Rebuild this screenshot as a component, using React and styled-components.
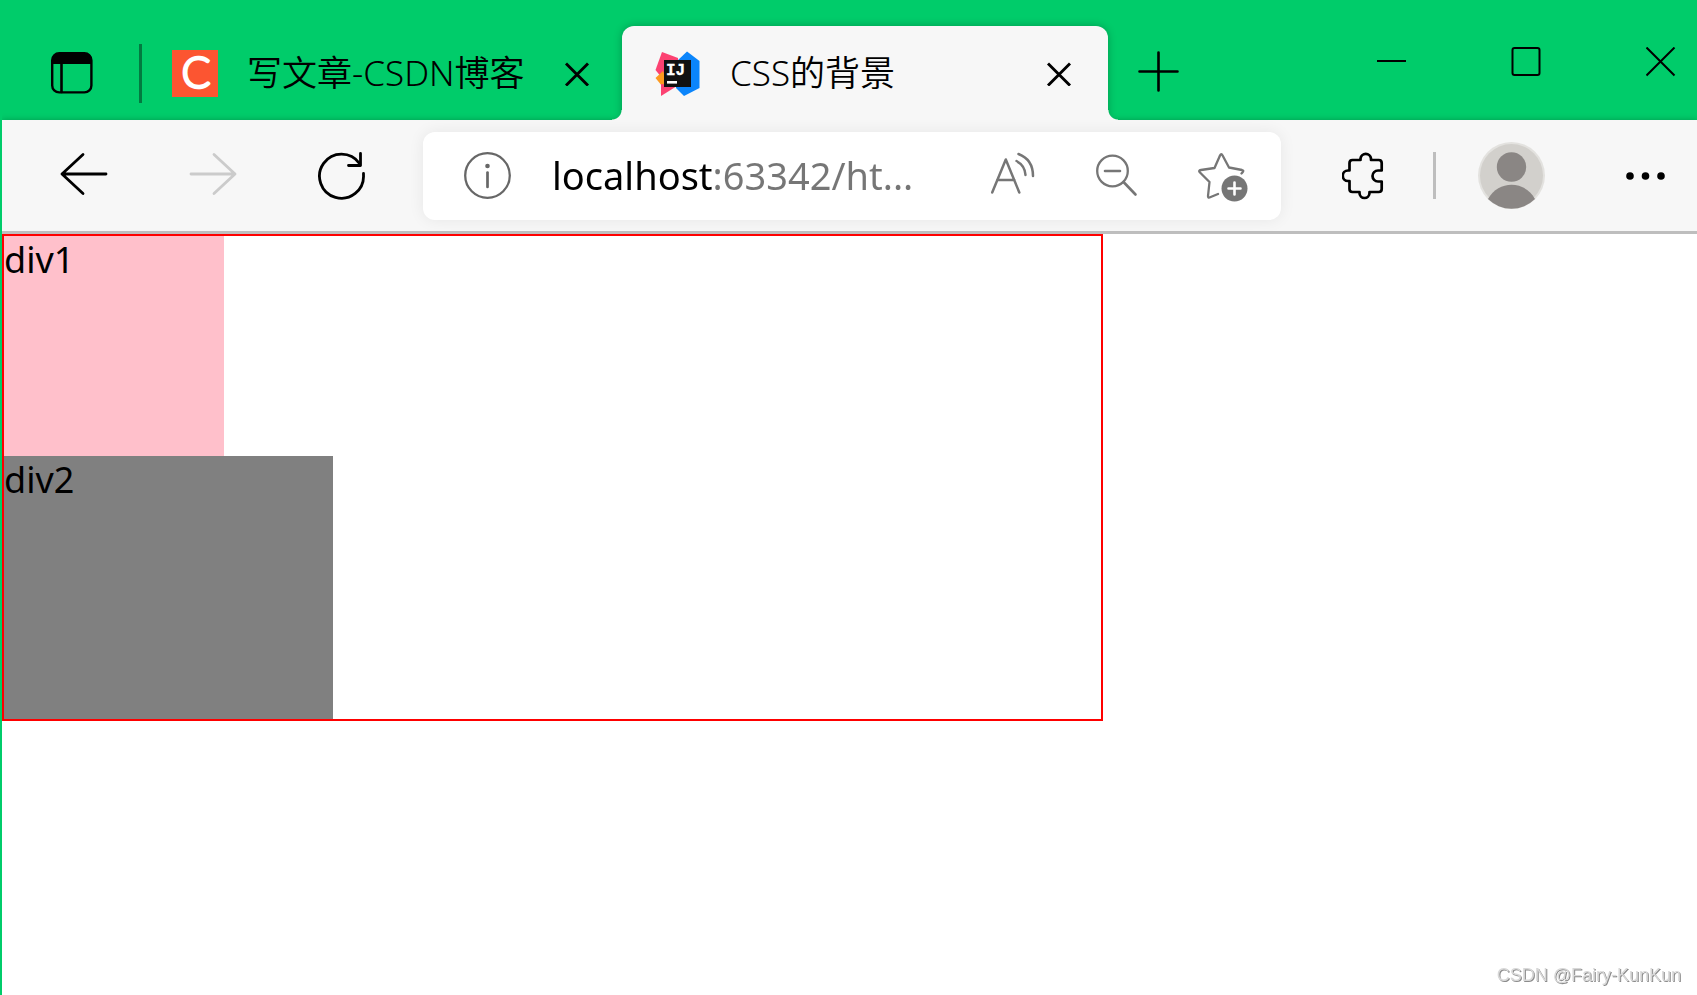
import React from "react";
import styled, { createGlobalStyle } from "styled-components";

const GREEN = "#00cc6a";
const CHROME = "#f7f7f7";
const UI_FONT = '"Noto Sans", "Noto Sans CJK SC", sans-serif';

const GlobalStyle = createGlobalStyle`
  * { box-sizing: border-box; }
  body { margin: 0; background: #fff; color: #000; font-family: ${UI_FONT}; }
  svg { display: block; flex: none; }
`;

const BrowserWindow = styled.div`
  display: flex;
  flex-direction: column;
  min-height: 100vh;
  border-left: 2px solid ${GREEN};
`;

const TitleBar = styled.header`
  display: flex;
  height: 120px;
  margin-left: -2px;
  background: ${GREEN};
`;

const TabStrip = styled.div`
  display: flex;
  align-items: center;
  flex: 1;
  min-width: 0;
  margin-top: 26px;
  padding-left: 51px;
`;

const Divider = styled.span`
  flex: none;
  width: 3px;
  height: ${(p) => p.$height}px;
  margin: ${(p) => p.$margin};
  background: ${(p) => p.$color};
`;

const IconButton = styled.button`
  display: flex;
  align-items: center;
  justify-content: center;
  flex: none;
  padding: 0;
  border: 0;
  background: none;
  color: ${(p) => p.$color || "#000"};
`;

const Tab = styled.div`
  display: flex;
  align-items: center;
  flex: none;
  height: 94px;
  width: ${(p) => (p.$active ? 486 : 480)}px;
  padding: 0 ${(p) => (p.$active ? "36px 0 32px" : "32px 0 30px")};
`;

const ActiveTab = styled(Tab)`
  position: relative;
  z-index: 1;
  border-radius: 12px 12px 0 0;
  background: ${CHROME};
  box-shadow: 0 0 8px rgba(0, 0, 0, 0.25);
  clip-path: inset(-10px -12px 0 -12px);

  &::before,
  &::after {
    content: "";
    position: absolute;
    bottom: 0;
    width: 10px;
    height: 10px;
  }
  &::before {
    right: 100%;
    background: radial-gradient(circle at 0 0, transparent 9px, ${CHROME} 10px);
  }
  &::after {
    left: 100%;
    background: radial-gradient(circle at 100% 0, transparent 9px, ${CHROME} 10px);
  }
`;

const TabTitle = styled.button`
  flex: 1;
  min-width: 0;
  margin-left: 29px;
  padding: 0;
  border: 0;
  background: none;
  color: #000;
  font: 350 35px/48px ${UI_FONT};
  text-align: left;
  white-space: nowrap;
`;

const NewTab = styled(IconButton)`
  margin-left: 30px;
`;

const WindowControls = styled.div`
  display: flex;
  align-items: flex-start;
  gap: 105px;
  padding: 47px 21px 0 0;
`;

const Toolbar = styled.nav`
  display: flex;
  align-items: center;
  height: 114px;
  padding: 0 32px 0 58px;
  border-bottom: 3px solid #bebebe;
  background: ${CHROME};
  box-shadow: 0 0 6px rgba(0, 0, 0, 0.25);
  clip-path: inset(-10px 0 0 0);
`;

const NavButtons = styled.div`
  display: flex;
  gap: 81px;
  flex: none;
`;

const AddressBar = styled.form`
  display: flex;
  align-items: center;
  flex: 1;
  min-width: 0;
  height: 88px;
  margin: 0 61px 0 57px;
  padding: 0 33px 0 41px;
  border-radius: 12px;
  background: #fff;
  box-shadow: 0 0 16px rgba(0, 0, 0, 0.07);
`;

const AddressInput = styled.input`
  flex: 1;
  min-width: 0;
  height: 56px;
  margin: 0 40px;
  padding: 0 0 2px;
  border: 0;
  outline: 0;
  font: 38px/54px ${UI_FONT};
  color: #767676;
  background: linear-gradient(to right, #000 162px, #767676 162px);
  background-clip: text;
  -webkit-background-clip: text;
  -webkit-text-fill-color: transparent;
`;

const AddressActions = styled.div`
  display: flex;
  align-items: center;
  gap: 60px;
  flex: none;
`;

const Profile = styled(IconButton)`
  margin-right: 80px;
`;

const Page = styled.main`
  flex: 1;
`;

const Outer = styled.section`
  width: 1101px;
  max-width: 100%;
  border: 2px solid #f00;
`;

const Box = styled.div`
  width: ${(p) => p.$width}px;
  height: ${(p) => p.$height}px;
  background: ${(p) => p.$color};
  font-size: 36px;
  line-height: 48px;
`;

const Watermark = styled.span`
  position: fixed;
  right: 16px;
  bottom: 9px;
  color: #d8d8d8;
  font: 18px/22px "Liberation Sans", sans-serif;
  text-shadow: 1px 1px 0 #8c8c8c;
`;

const stroke = (width) => ({
  fill: "none",
  stroke: "currentColor",
  strokeWidth: width,
  strokeLinecap: "round",
  strokeLinejoin: "round",
});

const TabActionsIcon = () => (
  <svg width="42" height="42" viewBox="0 0 42 42">
    <rect x="1.2" y="1.2" width="39.2" height="39.2" rx="7" {...stroke(2.4)} />
    <path d="M1 12V8a7 7 0 0 1 7-7h26a7 7 0 0 1 7 7v4z" fill="currentColor" />
    <path d="M10.5 12v28" {...stroke(2.6)} />
  </svg>
);

const CsdnIcon = () => (
  <svg width="46" height="47" viewBox="0 0 46 47" overflow="visible" aria-hidden="true">
    <rect width="46" height="47" fill="#fc5531" />
    <text x="24" y="38" textAnchor="middle" fontFamily="Lato, sans-serif" fontWeight="300" fontSize="43" fill="#fff" stroke="#fff" strokeWidth="2.6" strokeLinejoin="round">C</text>
  </svg>
);

const IdeaIcon = () => (
  <svg width="47" height="47" viewBox="0 0 47 47" aria-hidden="true">
    <path d="M8 2 24 8 24 28 8 28 1.5 20z" fill="#fc4272" />
    <path d="M1.5 28 9 21 14 35 8 36z" fill="#fd9a20" />
    <path d="M22 38 22 12 33 1.5 45.5 11V38L30 46z" fill="#0b85fb" />
    <path d="M7 34 23 36 7 46z" fill="#fc4272" />
    <rect x="10" y="10" width="27" height="27" fill="#111" />
    <text x="12" y="25" fontFamily="Liberation Mono, monospace" fontWeight="700" fontSize="16" fill="#fff" stroke="#fff" strokeWidth="0.3">IJ</text>
    <rect x="13" y="31" width="10" height="2.6" fill="#fff" />
  </svg>
);

const CloseIcon = () => (
  <svg width="26" height="26" viewBox="0 0 26 26">
    <path d="M2 3.5 24 25.5M24 3.5 2 25.5" {...stroke(2.9)} strokeLinecap="butt" />
  </svg>
);

const PlusIcon = () => (
  <svg width="41" height="44" viewBox="0 0 41 44">
    <path d="M20.5 1.5v38M1.5 20.5h38" {...stroke(2.6)} />
  </svg>
);

const MinimizeIcon = () => (
  <svg width="29" height="30" viewBox="0 0 29 30"><path d="M0 14h29" {...stroke(2)} strokeLinecap="butt" /></svg>
);

const MaximizeIcon = () => (
  <svg width="30" height="30" viewBox="0 0 30 30"><rect x="1.5" y="1" width="27" height="27" rx="2" {...stroke(2)} /></svg>
);

const WindowCloseIcon = () => (
  <svg width="30" height="30" viewBox="0 0 30 30"><path d="M.5 .5 28.5 28.5M28.5 .5 .5 28.5" {...stroke(2)} strokeLinecap="butt" /></svg>
);

const BackIcon = () => (
  <svg width="48" height="48" viewBox="0 0 48 48"><path d="M23 2.5 2 22 23 41.5M2 22h44" {...stroke(2.8)} /></svg>
);

const ForwardIcon = () => (
  <svg width="48" height="48" viewBox="0 0 48 48"><path d="M25 2.5 46 22 25 41.5M46 22H2" {...stroke(2.8)} /></svg>
);

const RefreshIcon = () => (
  <svg width="48" height="48" viewBox="0 0 48 48">
    <path d="M45.5 21.5V23A22 22 0 1 1 41.5 11.5" {...stroke(2.8)} />
    <path d="M42.5 1.5v12H30.5" {...stroke(2.8)} />
  </svg>
);

const InfoIcon = () => (
  <svg width="48" height="48" viewBox="0 0 48 48">
    <circle cx="23.5" cy="23.5" r="22.3" {...stroke(2.3)} />
    <path d="M23.5 20.5v14.5" {...stroke(2.7)} />
    <circle cx="23.5" cy="14" r="2.3" fill="currentColor" />
  </svg>
);

const ReadAloudIcon = () => (
  <svg width="45" height="48" viewBox="0 0 45 48">
    <path d="M1.2 40.5 14.8 7.5 28.3 40.5M6.2 28H23.4" {...stroke(2.5)} />
    <path d="M25.5 9Q34 13.5 34.5 23M27.5 2Q42 7.5 42 24" {...stroke(2.5)} />
  </svg>
);

const ZoomOutIcon = () => (
  <svg width="42" height="48" viewBox="0 0 42 48">
    <circle cx="16.5" cy="19" r="15.3" {...stroke(2.3)} />
    <path d="M9 19h15M27.5 30 39.5 42.5" {...stroke(2.6)} />
  </svg>
);

const FavoriteIcon = () => (
  <svg width="50" height="52" viewBox="0 0 50 52">
    <path d="M20 44 11.5 47.5Q10 48 10 46L11.5 32 2 22.5Q0 20.5 3 20L16.5 18 22 5.5Q23.3 3 24.6 5.5L31 17.5 44 20Q46 20.5 44.8 22L43.5 23.5" {...stroke(2.3)} />
    <circle cx="36.5" cy="38.5" r="13" fill="currentColor" />
    <path d="M36.5 32.5v12M30.5 38.5h12" stroke="#fff" strokeWidth="2.6" strokeLinecap="round" />
  </svg>
);

const ExtensionsIcon = () => (
  <svg width="42" height="48" viewBox="0 0 42 48">
    <path d="M39.7 17.5V11Q39.7 8 36.7 8H29V6.5A5.3 5.3 0 0 0 18.5 6.5V8H10.5Q7.5 8 7.5 11V18.5H6A4.8 4.8 0 0 0 6 29H7.5V37Q7.5 40 10.5 40H17.5V41A5 5 0 0 0 27.5 41V40H36.7Q39.7 40 39.7 37V29.5H36A5.5 5.5 0 0 1 36 18.5H39.7z" {...stroke(2.7)} />
  </svg>
);

const AvatarIcon = () => (
  <svg width="68" height="68" viewBox="0 0 68 68">
    <circle cx="33.5" cy="33.5" r="33.5" fill="#e3e2df" />
    <circle cx="33.5" cy="33.5" r="31.5" fill="#d2d0cc" />
    <circle cx="33.5" cy="25" r="14.7" fill="#8a8684" />
    <path d="M10 57C20.5 38 46.5 38 57 57A33.5 33.5 0 0 1 10 57z" fill="#8a8684" />
  </svg>
);

const MoreIcon = () => (
  <svg width="39" height="10" viewBox="0 0 39 10">
    {[4, 19.5, 35].map((x) => <circle key={x} cx={x} cy="5" r="3.8" fill="currentColor" />)}
  </svg>
);

export default function App() {
  return (
    <>
      <GlobalStyle />
      <BrowserWindow>
        <TitleBar>
          <TabStrip>
            <IconButton aria-label="Tab actions"><TabActionsIcon /></IconButton>
            <Divider $height={59} $margin="0 0 0 46px" $color="#027a40" />
            <Tab>
              <CsdnIcon />
              <TabTitle>写文章-CSDN博客</TabTitle>
              <IconButton aria-label="Close tab"><CloseIcon /></IconButton>
            </Tab>
            <ActiveTab $active>
              <IdeaIcon />
              <TabTitle>CSS的背景</TabTitle>
              <IconButton aria-label="Close tab"><CloseIcon /></IconButton>
            </ActiveTab>
            <NewTab aria-label="New tab"><PlusIcon /></NewTab>
          </TabStrip>
          <WindowControls>
            <IconButton aria-label="Minimize"><MinimizeIcon /></IconButton>
            <IconButton aria-label="Maximize"><MaximizeIcon /></IconButton>
            <IconButton aria-label="Close window"><WindowCloseIcon /></IconButton>
          </WindowControls>
        </TitleBar>
        <Toolbar>
          <NavButtons>
            <IconButton aria-label="Back"><BackIcon /></IconButton>
            <IconButton aria-label="Forward" disabled $color="#cbcbcb"><ForwardIcon /></IconButton>
            <IconButton aria-label="Refresh"><RefreshIcon /></IconButton>
          </NavButtons>
          <AddressBar onSubmit={(e) => e.preventDefault()}>
            <IconButton type="button" aria-label="Site information" $color="#676767"><InfoIcon /></IconButton>
            <AddressInput aria-label="Address" defaultValue="localhost:63342/ht..." />
            <AddressActions>
              <IconButton type="button" aria-label="Read aloud" $color="#767676"><ReadAloudIcon /></IconButton>
              <IconButton type="button" aria-label="Zoom out" $color="#767676"><ZoomOutIcon /></IconButton>
              <IconButton type="button" aria-label="Add to favorites" $color="#767676"><FavoriteIcon /></IconButton>
            </AddressActions>
          </AddressBar>
          <IconButton aria-label="Extensions"><ExtensionsIcon /></IconButton>
          <Divider $height={47} $margin="0 42px 0 49px" $color="#bebebe" />
          <Profile aria-label="Profile"><AvatarIcon /></Profile>
          <IconButton aria-label="More"><MoreIcon /></IconButton>
        </Toolbar>
        <Page>
          <Outer>
            <Box $width={220} $height={220} $color="pink">div1</Box>
            <Box $width={329} $height={263} $color="gray">div2</Box>
          </Outer>
        </Page>
      </BrowserWindow>
      <Watermark>CSDN @Fairy-KunKun</Watermark>
    </>
  );
}
